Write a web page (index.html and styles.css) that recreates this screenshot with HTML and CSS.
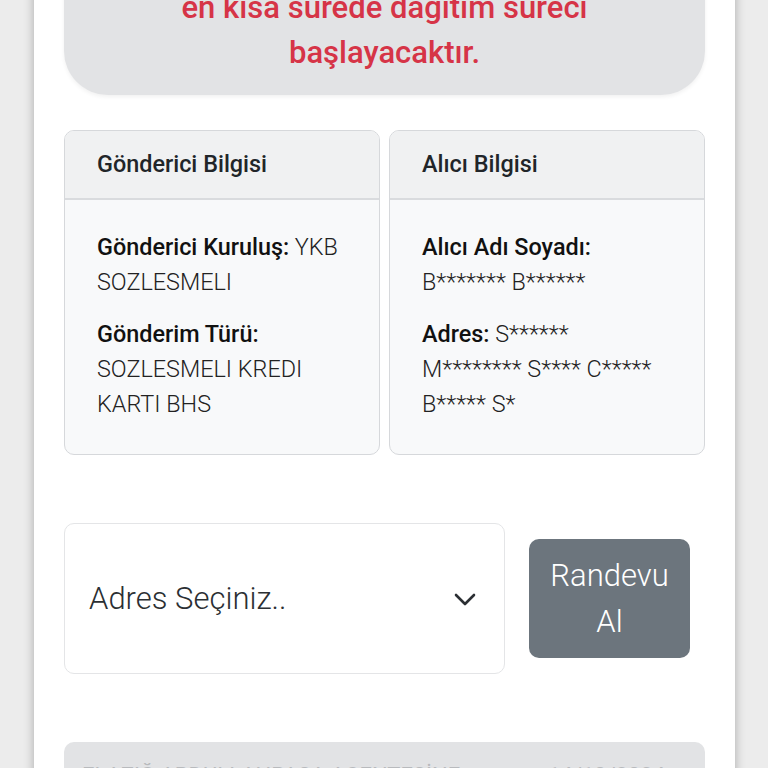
FILE: index.html
```html
<!DOCTYPE html>
<html lang="tr">
  <head>
    <meta charset="UTF-8" />
    <meta name="viewport" content="width=device-width, initial-scale=1.0" />
    <title>Gönderi Takip</title>
    <link rel="stylesheet" href="styles.css">
  </head>

  <body>
    <div class="page">
      <!-- Status message -->
      <div class="notice">
        en kısa sürede dağıtım süreci<br />başlayacaktır.
      </div>

      <!-- Sender / receiver -->
      <div class="info-row">
        <div class="card">
          <div class="card-head">Gönderici Bilgisi</div>
          <div class="card-body">
            <p><b>Gönderici Kuruluş:</b> YKB SOZLESMELI</p>
            <p><b>Gönderim Türü:</b> SOZLESMELI KREDI KARTI BHS</p>
          </div>
        </div>
        <div class="card">
          <div class="card-head">Alıcı Bilgisi</div>
          <div class="card-body">
            <p><b>Alıcı Adı Soyadı:</b><br />B******* B******</p>
            <p><b>Adres:</b> S******<br />M******** S**** C*****<br />B***** S*</p>
          </div>
        </div>
      </div>

      <!-- Appointment -->
      <div class="appointment">
        <div class="address-select">
          <span>Adres Seçiniz..</span>
          <svg class="chevron" width="22" height="14" viewBox="0 0 22 14">
            <path d="M2 2 L11 11 L20 2" fill="none" stroke="#2b2f33" stroke-width="2.6" stroke-linecap="round" stroke-linejoin="round" />
          </svg>
        </div>
        <button class="appointment-button">Randevu Al</button>
      </div>

      <!-- Movements -->
      <div class="movement">
        <span>ELAZIĞ ABDULLAHPAŞA ACENTESİNE</span>
        <span>14/10/2024</span>
      </div>
    </div>
  </body>
</html>
```

FILE: styles.css
```css
* {
  box-sizing: border-box;
}

html,
body {
  margin: 0;
  height: 100%;
  overflow: hidden;
}

body {
  background-color: #ececec;
  font-family: Roboto, "Noto Sans", sans-serif;
  color: #212529;
}

/* --- Page --- */

.page {
  width: 701px;
  min-height: 100%;
  margin-left: 34px;
  padding: 0 30px;
  background-color: #ffffff;
  box-shadow: 0 0 10px rgba(0, 0, 0, 0.28);
}

/* --- Notice --- */

.notice {
  margin-top: -35px;
  padding: 20px 20px 20px;
  background-color: #e2e3e5;
  border-radius: 0 0 44px 44px;
  color: #d63447;
  font-size: 31px;
  font-weight: 500;
  line-height: 45px;
  text-align: center;
  box-shadow: 0 2px 4px rgba(0, 0, 0, 0.06);
}

/* --- Cards --- */

.info-row {
  display: flex;
  gap: 9px;
  margin-top: 35px;
}

.card {
  flex: 1 1 0;
  border: 1px solid #d6d8db;
  border-radius: 10px;
  overflow: hidden;
  background-color: #f8f9fa;
  font-size: 23.4px;
}

.card-head {
  padding: 16px 32px;
  line-height: 35px;
  background-color: #f0f1f2;
  border-bottom: 2px solid #d9dbde;
  font-weight: 500;
}

.card-body {
  padding: 30px 32px 32px;
  line-height: 35px;
  font-weight: 300;
  color: #222;
}

.card-body p {
  margin: 0 0 17px;
}

.card-body p:last-child {
  margin-bottom: 0;
}

.card-body b {
  font-weight: 500;
  color: #111;
}

/* --- Appointment --- */

.appointment {
  display: flex;
  align-items: center;
  gap: 24px;
  margin-top: 68px;
}

.address-select {
  flex: 0 0 441px;
  height: 151px;
  display: flex;
  align-items: center;
  justify-content: space-between;
  padding: 0 28px 0 24px;
  background-color: #ffffff;
  border: 1px solid #e4e5e7;
  border-radius: 10px;
  font-size: 31px;
  font-weight: 300;
  color: #2b2f33;
}

.chevron {
  margin-top: 2px;
}

.appointment-button {
  width: 161px;
  height: 119px;
  padding: 0 20px;
  border: none;
  border-radius: 10px;
  background-color: #6c757d;
  color: #ffffff;
  font-family: Roboto, "Noto Sans", sans-serif;
  font-size: 31px;
  font-weight: 300;
  line-height: 46px;
}

/* --- Movement --- */

.movement {
  display: flex;
  justify-content: space-between;
  margin-top: 68px;
  padding: 16px 40px 20px 18px;
  background-color: #e2e3e5;
  border-radius: 10px;
  color: #b8babd;
  font-size: 22px;
  line-height: 35px;
}
```
